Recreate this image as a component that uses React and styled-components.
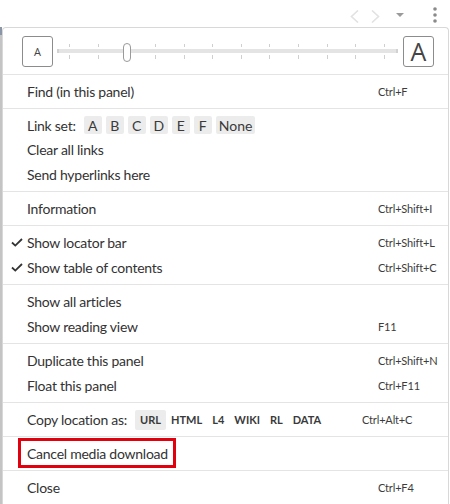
import React from 'react';
import styled, { createGlobalStyle } from 'styled-components';

const Global = createGlobalStyle`
  html, body { margin: 0; padding: 0; background: #fff; }
  body { font-family: Lato, "Noto Sans", sans-serif; color: #333; overflow: hidden; }
  * { box-sizing: border-box; }
`;

const Page = styled.div`
  width: 450px;
  height: 504px;
  display: flex;
  flex-direction: column;
  overflow: hidden;
`;

const TopBar = styled.div`
  height: 27px;
  flex-shrink: 0;
  display: flex;
  justify-content: flex-end;
  align-items: flex-start;
  padding-right: 13px;
`;

const TopIcon = styled.div`
  display: flex;
  margin-left: ${(p) => p.$gap || 0}px;
  margin-top: ${(p) => p.$top || 0}px;
`;

const Body = styled.div`
  flex: 1;
  display: flex;
  min-height: 0;
`;

const Backdrop = styled.div`
  width: 2px;
  flex-shrink: 0;
  background: linear-gradient(#8a96a8 0 8px, #c4c4c4 8px);
`;

const Panel = styled.div`
  flex: 1;
  margin-right: 1px;
  border: 1px solid #d8d8d8;
  border-bottom: none;
  border-radius: 4px 4px 0 0;
  background: #fff;
  display: flex;
  flex-direction: column;
`;

const ZoomRow = styled.div`
  display: flex;
  align-items: stretch;
  padding: 8px 14px 7px 19px;
  border-bottom: 1px solid #e4e4e4;
`;

const FontBox = styled.div`
  width: 31px;
  height: 31px;
  border: 1px solid #8c8c8c;
  border-radius: 3px;
  display: flex;
  align-items: center;
  justify-content: center;
  color: #444;
  font-family: "Open Sans", Lato, sans-serif;
  font-size: ${(p) => p.$size}px;
  line-height: 1;
`;

const Slider = styled.div`
  flex: 1;
  margin: 0 5px 0 4px;
  position: relative;
  display: flex;
  flex-direction: column;
  justify-content: center;
  gap: 2px;
`;

const TickRow = styled.div`
  height: ${(p) => p.$h}px;
  display: flex;
  justify-content: space-between;
  padding: 0 13px 0 12px;
`;

const Tick = styled.div`
  width: 1px;
  height: 100%;
  background: #cfcfcf;
`;

const Track = styled.div`
  height: 4px;
  background: #e4e4e4;
  border-left: 2px solid #d2d2d2;
  border-right: 2px solid #d2d2d2;
`;

const Thumb = styled.div`
  position: absolute;
  top: 7px;
  width: 8px;
  height: 19px;
  border: 1px solid #9a9a9a;
  border-radius: 4px;
  background: #fff;
`;

const Section = styled.div`
  padding: 4px 0;
  border-bottom: 1px solid #e4e4e4;
`;

const Item = styled.div`
  display: grid;
  grid-template-columns: 24px 1fr auto;
  align-items: center;
  height: ${(p) => p.$h || 25}px;
  padding-right: 10px;
  font-size: 14px;
  letter-spacing: -0.25px;
  color: #333;
`;

const Check = styled.div`
  display: flex;
  justify-content: flex-end;
  padding-right: 4px;
`;

const Label = styled.div`
  display: flex;
  align-items: center;
  gap: 8px;
  white-space: nowrap;
`;

const Shortcut = styled.div`
  width: ${(p) => (p.$wide ? 76 : 60)}px;
  font-size: 11px;
  letter-spacing: -0.15px;
  color: #3c3c3c;
  white-space: nowrap;
`;

const Chips = styled.div`
  display: flex;
  gap: ${(p) => p.$gap}px;
`;

const Chip = styled.span`
  min-width: 18px;
  height: ${(p) => (p.$small ? 20 : 18)}px;
  padding: 0 ${(p) => (p.$small ? 5 : 3)}px;
  display: inline-flex;
  align-items: center;
  justify-content: center;
  background: ${(p) => (p.$filled ? '#ececec' : 'transparent')};
  border-radius: 2px;
  color: #3a3a3a;
  font-size: ${(p) => (p.$small ? 11 : 14)}px;
  font-weight: ${(p) => (p.$small ? 700 : 400)};
  letter-spacing: 0;
`;

const Highlight = styled.span`
  position: relative;
  line-height: 17px;
  &::after {
    content: '';
    position: absolute;
    left: -9px;
    right: -8px;
    top: -7px;
    bottom: -6px;
    border: 3px solid #e0000e;
  }
`;

const CheckIcon = () => (
  <svg width="12" height="9" viewBox="0 0 12 9">
    <path d="M1 4.5 L4.3 7.6 L11 1" fill="none" stroke="#333" strokeWidth="1.8" />
  </svg>
);

const Row = ({ checked, label, shortcut, wide, h }) => (
  <Item $h={h}>
    <Check>{checked ? <CheckIcon /> : null}</Check>
    <Label>{label}</Label>
    <Shortcut $wide={wide}>{shortcut}</Shortcut>
  </Item>
);

const ticks = Array.from({ length: 12 });

export default function App() {
  const thumbIndex = 2;
  const thumbLeft = 12 + thumbIndex * (316 / 11) - 3.5;
  return (
    <Page>
      <Global />
      <TopBar>
        <TopIcon $top={10}>
          <svg width="9" height="13" viewBox="0 0 9 13">
            <path d="M8 0.5 L1.5 6.5 L8 12.5" fill="none" stroke="#e2e2e2" strokeWidth="1.6" />
          </svg>
        </TopIcon>
        <TopIcon $gap={12} $top={10}>
          <svg width="9" height="13" viewBox="0 0 9 13">
            <path d="M1 0.5 L7.5 6.5 L1 12.5" fill="none" stroke="#e2e2e2" strokeWidth="1.6" />
          </svg>
        </TopIcon>
        <TopIcon $gap={16} $top={13}>
          <svg width="8" height="4" viewBox="0 0 8 4">
            <path d="M0 0 H8 L4 4 Z" fill="#9a9a9a" />
          </svg>
        </TopIcon>
        <TopIcon $gap={29} $top={7}>
          <svg width="4" height="16" viewBox="0 0 4 16">
            <circle cx="2" cy="2" r="1.8" fill="#8a8a8a" />
            <circle cx="2" cy="8" r="1.8" fill="#8a8a8a" />
            <circle cx="2" cy="14" r="1.8" fill="#8a8a8a" />
          </svg>
        </TopIcon>
      </TopBar>
      <Body>
        <Backdrop />
        <Panel>
          <ZoomRow>
            <FontBox $size={11}>A</FontBox>
            <Slider>
              <TickRow $h={3}>
                {ticks.map((_, i) => <Tick key={i} />)}
              </TickRow>
              <Track />
              <TickRow $h={4}>
                {ticks.map((_, i) => <Tick key={i} />)}
              </TickRow>
              <Thumb style={{ left: `${thumbLeft}px` }} />
            </Slider>
            <FontBox $size={25}>A</FontBox>
          </ZoomRow>

          <Section>
            <Row label="Find (in this panel)" shortcut="Ctrl+F" />
          </Section>

          <Section>
            <Row
              h={24}
              label={
                <>
                  Link set:
                  <Chips $gap={4}>
                    {['A', 'B', 'C', 'D', 'E', 'F', 'None'].map((c) => (
                      <Chip key={c} $filled>{c}</Chip>
                    ))}
                  </Chips>
                </>
              }
            />
            <Row label="Clear all links" />
            <Row label="Send hyperlinks here" />
          </Section>

          <Section>
            <Row label="Information" shortcut="Ctrl+Shift+I" />
          </Section>

          <Section>
            <Row checked label="Show locator bar" shortcut="Ctrl+Shift+L" />
            <Row checked label="Show table of contents" shortcut="Ctrl+Shift+C" />
          </Section>

          <Section>
            <Row label="Show all articles" />
            <Row label="Show reading view" shortcut="F11" />
          </Section>

          <Section>
            <Row label="Duplicate this panel" shortcut="Ctrl+Shift+N" />
            <Row label="Float this panel" shortcut="Ctrl+F11" />
          </Section>

          <Section>
            <Row
              wide
              shortcut="Ctrl+Alt+C"
              label={
                <>
                  Copy location as:
                  <Chips $gap={0}>
                    {['URL', 'HTML', 'L4', 'WIKI', 'RL', 'DATA'].map((c, i) => (
                      <Chip key={c} $small $filled={i === 0}>{c}</Chip>
                    ))}
                  </Chips>
                </>
              }
            />
          </Section>

          <Section>
            <Row label={<Highlight>Cancel media download</Highlight>} />
          </Section>

          <Section>
            <Row label="Close" shortcut="Ctrl+F4" />
          </Section>
        </Panel>
      </Body>
    </Page>
  );
}
